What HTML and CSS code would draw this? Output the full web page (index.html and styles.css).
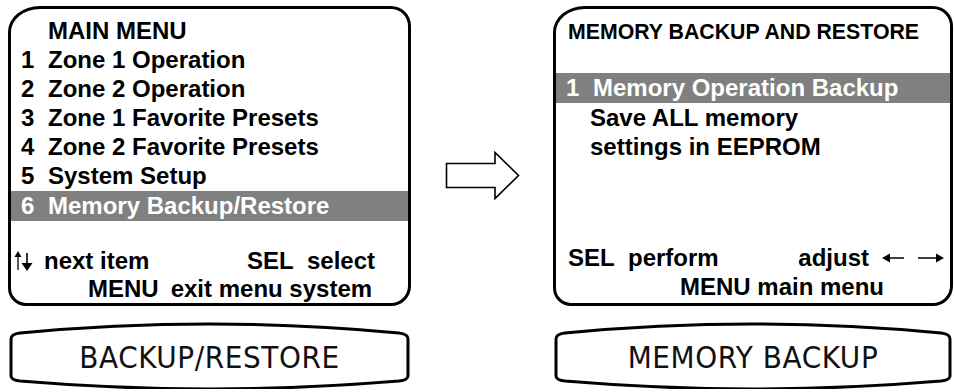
FILE: index.html
```html
<!DOCTYPE html>
<html lang="en">

<head>
    <meta charset="UTF-8">
    <title>Memory Backup and Restore</title>
    <link rel="stylesheet" href="styles.css">
</head>

<body>

    <div class="stage">

        <!-- main menu screen -->
        <div class="screen screen-left">
            <div class="title title-main">MAIN MENU</div>
            <div class="row"><span class="num">1</span>Zone 1 Operation</div>
            <div class="row"><span class="num">2</span>Zone 2 Operation</div>
            <div class="row"><span class="num">3</span>Zone 1 Favorite Presets</div>
            <div class="row"><span class="num">4</span>Zone 2 Favorite Presets</div>
            <div class="row"><span class="num">5</span>System Setup</div>
            <div class="row row-on"><span class="num">6</span>Memory Backup/Restore</div>

            <div class="foot">
                <div class="foot-line">
                    <span class="keys">
                        <svg class="updown" width="22" height="20" viewBox="0 0 22 20">
                            <path d="M5 19 V4" stroke="#000" stroke-width="1.3" fill="none"/>
                            <path d="M5 0 L1.5 6 H8.5 Z" fill="#000"/>
                            <path d="M14 2 V13" stroke="#000" stroke-width="1.6" fill="none"/>
                            <path d="M14 20 L8.5 12 H19.5 Z" fill="#000"/>
                        </svg>next item
                    </span>
                    <span class="sel">SEL&nbsp; select</span>
                </div>
                <div class="foot-line foot-exit">MENU<span class="exit">exit menu system</span></div>
            </div>
        </div>

        <!-- arrow between screens -->
        <div class="between">
            <svg width="76" height="50" viewBox="0 0 76 50">
                <path d="M1.5 12.5 H50 V1.5 L73.5 24.5 L50 47.5 V36.5 H1.5 Z" fill="#fff" stroke="#000" stroke-width="1.6"/>
            </svg>
        </div>

        <!-- memory backup screen -->
        <div class="screen screen-right">
            <div class="title title-mem">MEMORY BACKUP AND RESTORE</div>
            <div class="row row-on row-mem"><span class="num">1</span>Memory Operation Backup</div>
            <div class="row row-mem row-text">Save ALL memory</div>
            <div class="row row-mem row-text">settings in EEPROM</div>

            <div class="foot foot-mem">
                <div class="foot-line foot-perform">
                    <span>SEL&nbsp; perform</span>
                    <span class="adjust">adjust
                        <svg class="leftright" width="62" height="14" viewBox="0 0 62 14">
                            <path d="M4 7 H22" stroke="#000" stroke-width="1.5"/>
                            <path d="M0 7 L8 2.5 V11.5 Z" fill="#000"/>
                            <path d="M36 7 H57" stroke="#000" stroke-width="1.5"/>
                            <path d="M62 7 L54 2.5 V11.5 Z" fill="#000"/>
                        </svg>
                    </span>
                </div>
                <div class="foot-line foot-main">MENU main menu</div>
            </div>
        </div>

        <!-- button labels -->
        <div class="label">
            <svg class="label-shape" viewBox="0 0 400 68" preserveAspectRatio="none">
                <path d="M3 18 Q3 13 12 12 Q200 -6 388 12 Q397 13 397 18 L397 55 Q397 59 388 60 Q200 76 12 60 Q3 59 3 55 Z"
                      fill="none" stroke="#000" stroke-width="3" vector-effect="non-scaling-stroke"/>
            </svg>
            <span class="label-text">BACKUP/RESTORE</span>
        </div>
        <div></div>
        <div class="label">
            <svg class="label-shape" viewBox="0 0 400 68" preserveAspectRatio="none">
                <path d="M3 18 Q3 13 12 12 Q200 -6 388 12 Q397 13 397 18 L397 55 Q397 59 388 60 Q200 76 12 60 Q3 59 3 55 Z"
                      fill="none" stroke="#000" stroke-width="3" vector-effect="non-scaling-stroke"/>
            </svg>
            <span class="label-text">MEMORY BACKUP</span>
        </div>

    </div>

</body>

</html>
```

FILE: styles.css
```css
body {
    margin: 0;
    background: #fff;
    font-family: "Liberation Sans", Arial, sans-serif;
    color: #000;
}

.stage {
    display: grid;
    grid-template-columns: 403px 142px 400px;
    grid-template-rows: 300px 68px;
    row-gap: 15px;
    padding: 6px 0 0 8px;
    width: 954px;
    height: 392px;
    box-sizing: border-box;
    overflow: hidden;
}

.screen {
    border: 3px solid #000;
    border-radius: 32px 20px 20px 18px / 26px 20px 20px 18px;
    display: flex;
    flex-direction: column;
    font-weight: bold;
    font-size: 24px;
    overflow: hidden;
}

.title {
    line-height: 29px;
}

.title-main {
    padding: 7px 0 0 37px;
}

.title-mem {
    padding: 9px 0 0 12px;
    font-size: 21.3px;
}

.row {
    display: flex;
    line-height: 29px;
    height: 29px;
    padding-left: 10px;
    white-space: nowrap;
}

.num {
    width: 27px;
}

.row-on {
    background: #808080;
    color: #fff;
    height: 30px;
    line-height: 30px;
    margin-top: 1px;
}

.row-mem.row-on {
    margin-top: 26px;
}

.row-text {
    padding-left: 34px;
}

.foot {
    margin-top: auto;
}

.foot-line {
    display: flex;
    justify-content: space-between;
    align-items: center;
    line-height: 28px;
    white-space: nowrap;
}

.foot-mem {
    padding-bottom: 2px;
}

.foot-mem .foot-line {
    line-height: 29px;
}

.keys {
    display: flex;
    align-items: center;
}

.updown {
    margin: 0 9px 0 2px;
}

.sel {
    padding-right: 33px;
}

.foot-exit {
    justify-content: flex-start;
    padding-left: 77px;
}

.exit {
    margin-left: 12px;
}

.foot-perform {
    padding: 0 6px 0 12px;
}

.adjust {
    display: flex;
    align-items: center;
    gap: 13px;
}

.foot-main {
    justify-content: flex-start;
    padding-left: 124px;
}

.between {
    display: flex;
    align-items: flex-start;
    padding: 145px 0 0 34px;
}

.label {
    position: relative;
    display: flex;
    align-items: center;
    justify-content: center;
}

.label-shape {
    position: absolute;
    left: 0;
    top: 0;
    width: 100%;
    height: 100%;
}

.label-text {
    position: relative;
    font-family: "Liberation Sans Narrow", "DejaVu Sans Condensed", Lato, sans-serif;
    font-size: 31px;
    letter-spacing: 0.6px;
    color: #111;
    padding-top: 3px;
}
```
